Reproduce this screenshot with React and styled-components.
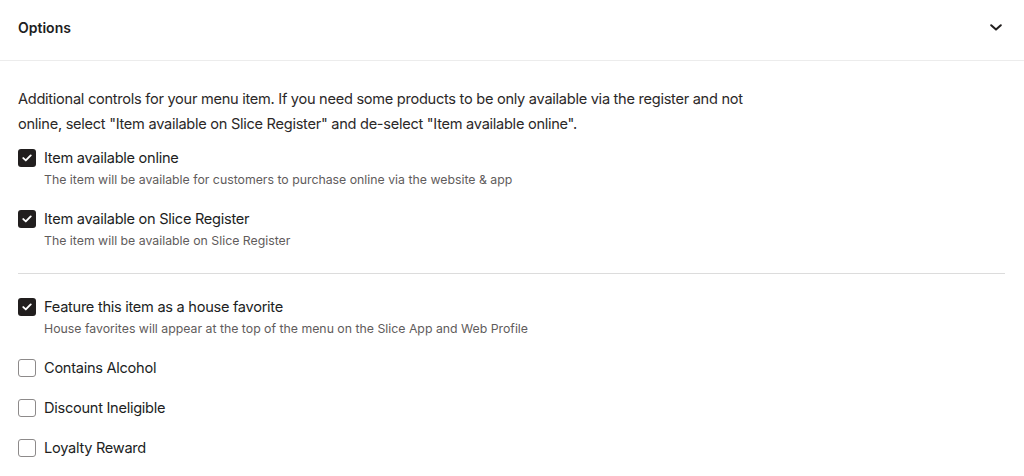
import React from "react";
import styled, { createGlobalStyle } from "styled-components";

const Global = createGlobalStyle`
  html, body { margin: 0; padding: 0; background: #fff; }
  body { font-family: Inter, "Noto Sans", sans-serif; color: #211e1e; -webkit-font-smoothing: antialiased; }
  * { box-sizing: border-box; }
`;

const Panel = styled.section`
  width: 1024px;
  background: #fff;
`;

const Header = styled.header`
  height: 61px;
  display: flex;
  align-items: center;
  justify-content: space-between;
  padding: 0 22px 6px 18px;
  border-bottom: 1px solid #ececec;
`;

const Title = styled.h2`
  margin: 0;
  font-size: 14px;
  font-weight: 600;
  color: #211e1e;
`;

const Body = styled.div`
  padding: 26px 19px 0 18px;
`;

const Description = styled.p`
  margin: 0 0 12px;
  max-width: 740px;
  font-size: 14.6px;
  letter-spacing: -0.28px;
  line-height: 25px;
  color: #2b2828;
`;

const Group = styled.div`
  display: flex;
  flex-direction: column;
  gap: ${(p) => p.$gap}px;
  padding-bottom: ${(p) => p.$bottom}px;
`;

const Divider = styled.hr`
  margin: 0 0 24px;
  border: 0;
  border-top: 1px solid #dcdcdc;
`;

const Option = styled.label`
  display: grid;
  grid-template-columns: 18px 1fr;
  column-gap: 8px;
  align-items: center;
  cursor: pointer;
`;

const Box = styled.span`
  width: 18px;
  height: 18px;
  border-radius: 3px;
  display: flex;
  align-items: center;
  justify-content: center;
  background: ${(p) => (p.$checked ? "#211e1e" : "#fff")};
  border: ${(p) => (p.$checked ? "none" : "1.5px solid #8d8a8a")};
`;

const Label = styled.span`
  font-size: 14.6px;
  letter-spacing: -0.28px;
  line-height: 18px;
  color: #211e1e;
`;

const Hint = styled.span`
  grid-column: 2;
  margin-top: 5px;
  font-size: 12.3px;
  line-height: 16px;
  color: #5f5c5c;
`;

const Check = () => (
  <svg width="10" height="8" viewBox="0 0 10 8" fill="none">
    <path d="M1.3 4.1 L3.8 6.4 L8.7 1.4" stroke="#fff" strokeWidth="1.9" strokeLinecap="round" strokeLinejoin="round" />
  </svg>
);

const Chevron = () => (
  <svg width="12" height="7" viewBox="0 0 12 7" fill="none">
    <path d="M1.2 1.2 L6 5.6 L10.8 1.2" stroke="#211e1e" strokeWidth="2" strokeLinecap="round" strokeLinejoin="round" />
  </svg>
);

const CheckOption = ({ checked, label, hint }) => (
  <Option>
    <Box $checked={checked}>{checked && <Check />}</Box>
    <Label>{label}</Label>
    {hint && <Hint>{hint}</Hint>}
  </Option>
);

export default function App() {
  return (
    <>
      <Global />
      <Panel>
        <Header>
          <Title>Options</Title>
          <Chevron />
        </Header>
        <Body>
          <Description>
            Additional controls for your menu item. If you need some products to be only available via the register and not
            online, select "Item available on Slice Register" and de-select "Item available online".
          </Description>
          <Group $gap={22} $bottom={24}>
            <CheckOption
              checked
              label="Item available online"
              hint="The item will be available for customers to purchase online via the website & app"
            />
            <CheckOption checked label="Item available on Slice Register" hint="The item will be available on Slice Register" />
          </Group>
          <Divider />
          <Group $gap={22} $bottom={0}>
            <CheckOption
              checked
              label="Feature this item as a house favorite"
              hint="House favorites will appear at the top of the menu on the Slice App and Web Profile"
            />
            <CheckOption label="Contains Alcohol" />
            <CheckOption label="Discount Ineligible" />
            <CheckOption label="Loyalty Reward" />
          </Group>
        </Body>
      </Panel>
    </>
  );
}
